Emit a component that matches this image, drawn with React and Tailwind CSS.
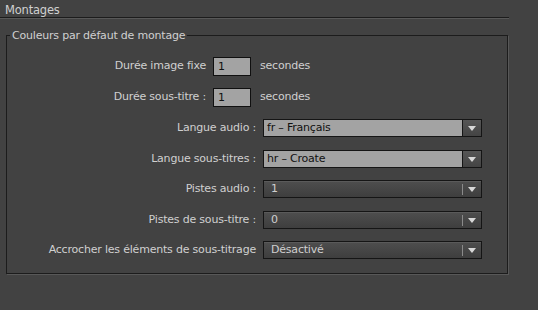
import React from 'react';

function Caret() {
  return (
    <svg width="8" height="5" viewBox="0 0 8 5" className="block">
      <polygon points="0,0 8,0 4,5" fill="#d8d8d8" />
    </svg>
  );
}

function NumberRow({ label, value, className }) {
  return (
    <div className={`flex items-center h-[19px] ${className}`}>
      <span className="w-[200px] text-right pr-px">{label}</span>
      <div className="ml-[6px] w-[38px] h-[19px] bg-[#a3a3a3] border border-[#101010] text-[#111] pl-[4px] leading-[17px]">
        {value}
      </div>
      <span className="ml-[9px]">secondes</span>
    </div>
  );
}

function LightSelect({ label, value, className }) {
  return (
    <div className={`flex items-center h-[18px] ${className}`}>
      <span className="w-[250px] text-right pr-px">{label}</span>
      <div className="ml-[6px] w-[219px] h-[18px] flex border border-[#151515] bg-[#a3a3a3]">
        <span className="flex-1 pl-[3px] leading-[16px] text-[#111]">{value}</span>
        <div className="w-[19px] flex items-center justify-center border-l border-[#151515] bg-gradient-to-b from-[#565656] to-[#444]">
          <Caret />
        </div>
      </div>
    </div>
  );
}

function DarkSelect({ label, value, className }) {
  return (
    <div className={`flex items-center h-[18px] ${className}`}>
      <span className="w-[250px] text-right pr-px">{label}</span>
      <div className="ml-[6px] w-[219px] h-[18px] flex items-center border border-[#151515] bg-gradient-to-b from-[#4e4e4e] to-[#3e3e3e] shadow-[inset_0_1px_0_#5a5a5a]">
        <span className="flex-1 pl-[7px] leading-[16px] text-[#cfcfcf]">{value}</span>
        <div className="w-px h-[11px] bg-[#8a8a8a]" />
        <div className="w-[18px] flex items-center justify-center">
          <Caret />
        </div>
      </div>
    </div>
  );
}

export default function App() {
  return (
    <div className="w-[538px] h-[310px] overflow-hidden bg-[#424242] text-[#d0d0d0] text-[11px] tracking-[-0.2px] font-['DejaVu_Sans',sans-serif]">
      <div className="w-[509px] h-[18px] pl-[5px] pt-[3px] leading-[14px] text-[11.5px] border-b border-[#1c1c1c] shadow-[0_1px_0_#585858]">
        Montages
      </div>

      <fieldset className="ml-[6px] mt-[9px] w-[502px] h-[247px] border border-[#1c1c1c] shadow-[1px_1px_0_#585858]">
        <legend className="ml-[3px] px-[2px] leading-[14px] pt-[2px] text-[11px]">Couleurs par défaut de montage</legend>

        <NumberRow label="Durée image fixe" value="1" className="mt-[14px]" />
        <NumberRow label="Durée sous-titre :" value="1" className="mt-[12px]" />
        <LightSelect label="Langue audio :" value="fr – Français" className="mt-[12px]" />
        <LightSelect label="Langue sous-titres :" value="hr – Croate" className="mt-[13px]" />
        <DarkSelect label="Pistes audio :" value="1" className="mt-[12px]" />
        <DarkSelect label="Pistes de sous-titre :" value="0" className="mt-[13px]" />
        <DarkSelect label="Accrocher les éléments de sous-titrage" value="Désactivé" className="mt-[12px]" />
      </fieldset>
    </div>
  );
}
